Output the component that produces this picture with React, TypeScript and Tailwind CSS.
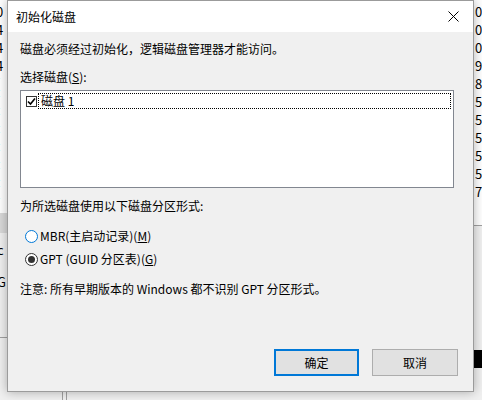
import React from "react";

const font = "font-['Noto_Sans_CJK_SC','Noto_Sans',sans-serif]";

const leftGlyphs = ["0", "4", "4", "4", "(", "(", "(", "(", "(", "(", "("];
const rightGlyphs = ["0", "0", "0", "9", "8", "5", "5", "5", "5", "5", "7"];

function Backdrop() {
    return (
        <div className="absolute inset-0 flex text-[13px] leading-[18px] text-black">
            {/* left edge of the window behind */}
            <div className="flex w-[7px] flex-col overflow-hidden">
                <div className="flex h-[213px] flex-col bg-white pt-[3px]">
                    {leftGlyphs.map((g, i) => (
                        <span key={i} className="-ml-[4px]">
                            {g}
                        </span>
                    ))}
                </div>
                <div className="h-[20px] bg-[#d9d9d9]" />
                <div className="flex flex-1 flex-col bg-[#f0f0f0] pt-[8px]">
                    <span className="-ml-[3px]">c</span>
                    <span className="-ml-[3px] mt-[14px]">G</span>
                    <div className="mt-[46px] h-px bg-[#a0a0a0]" />
                </div>
            </div>
            {/* middle: only the strip under the dialog shows */}
            <div className="flex flex-1 flex-col justify-end">
                <div className="flex h-[8px] bg-[#f0f0f0]">
                    <div className="w-[55px]" />
                    <div className="w-px bg-[#a0a0a0]" />
                    <div className="ml-[3px] w-px bg-[#a0a0a0]" />
                </div>
            </div>
            {/* right edge of the window behind */}
            <div className="flex w-[8px] flex-col overflow-hidden">
                <div className="flex h-[225px] flex-col bg-white pt-[3px]">
                    {rightGlyphs.map((g, i) => (
                        <span key={i} className="ml-[1px]">
                            {g}
                        </span>
                    ))}
                </div>
                <div className="h-px bg-[#a0a0a0]" />
                <div className="h-[124px] bg-[#f0f0f0]" />
                <div className="h-[18px] bg-black" />
                <div className="flex-1 bg-[#f0f0f0]" />
            </div>
        </div>
    );
}

function Radio({ checked, label, hot }: { checked?: boolean; label: React.ReactNode; hot?: boolean }) {
    return (
        <div className="flex h-[16px] items-center">
            <span
                className={`flex h-[13px] w-[13px] items-center justify-center rounded-full border bg-white ${
                    hot ? "border-[#0078d7]" : "border-[#333333]"
                }`}
            >
                {checked && <span className="h-[7px] w-[7px] rounded-full bg-[#333333]" />}
            </span>
            <span className="ml-[2px]">{label}</span>
        </div>
    );
}

export default function App() {
    return (
        <div className={`relative h-[400px] w-[482px] overflow-hidden ${font} text-[12px] leading-[16px] text-black`}>
            <Backdrop />

            {/* dialog window */}
            <div className="absolute left-[7px] top-0 flex h-[392px] w-[467px] flex-col border border-[#9b9b9b] bg-[#f0f0f0] shadow-[0_0_10px_rgba(0,0,0,0.3)]">
                <div className="flex h-[31px] shrink-0 items-center justify-between bg-white pl-[8px] pr-[14px]">
                    <span>初始化磁盘</span>
                    <svg width="11" height="11" viewBox="0 0 11 11" className="text-black">
                        <path d="M0.5 0.5 L10.5 10.5 M10.5 0.5 L0.5 10.5" stroke="currentColor" strokeWidth="1" />
                    </svg>
                </div>

                <div className="flex flex-1 flex-col px-[12px]">
                    <p className="mt-[9px]">磁盘必须经过初始化，逻辑磁盘管理器才能访问。</p>
                    <p className="mt-[12px]">
                        选择磁盘(<span className="underline">S</span>):
                    </p>

                    <div className="mt-[5px] h-[98px] w-[434px] border border-[#828790] bg-white px-[2px] pt-[2px]">
                        <div className="flex h-[16px] items-center">
                            <span className="ml-[3px] flex h-[11px] w-[11px] items-center justify-center border border-[#333333] bg-white">
                                <svg width="9" height="9" viewBox="0 0 9 9">
                                    <path d="M1 4.5 L3.5 7 L8 1.5" fill="none" stroke="#000" strokeWidth="1.6" />
                                </svg>
                            </span>
                            <span className="ml-[1px] flex h-[16px] flex-1 items-center border border-dotted border-black pl-[2px]">
                                磁盘 1
                            </span>
                        </div>
                    </div>

                    <p className="mt-[10px]">为所选磁盘使用以下磁盘分区形式:</p>

                    <div className="mt-[14px] flex flex-col gap-[7px] pl-[5px]">
                        <Radio
                            hot
                            label={
                                <>
                                    MBR(主启动记录)(<span className="underline">M</span>)
                                </>
                            }
                        />
                        <Radio
                            checked
                            label={
                                <>
                                    GPT (GUID 分区表)(<span className="underline">G</span>)
                                </>
                            }
                        />
                    </div>

                    <p className="mt-[14px]">注意: 所有早期版本的 Windows 都不识别 GPT 分区形式。</p>

                    <div className="mt-auto mb-[15px] flex justify-end gap-[13px] pr-[3px]">
                        <button className="flex h-[27px] w-[85px] items-center justify-center border-2 border-[#0078d7] bg-[#e1e1e1]">
                            确定
                        </button>
                        <button className="flex h-[27px] w-[86px] items-center justify-center border border-[#adadad] bg-[#e1e1e1]">
                            取消
                        </button>
                    </div>
                </div>
            </div>
        </div>
    );
}
